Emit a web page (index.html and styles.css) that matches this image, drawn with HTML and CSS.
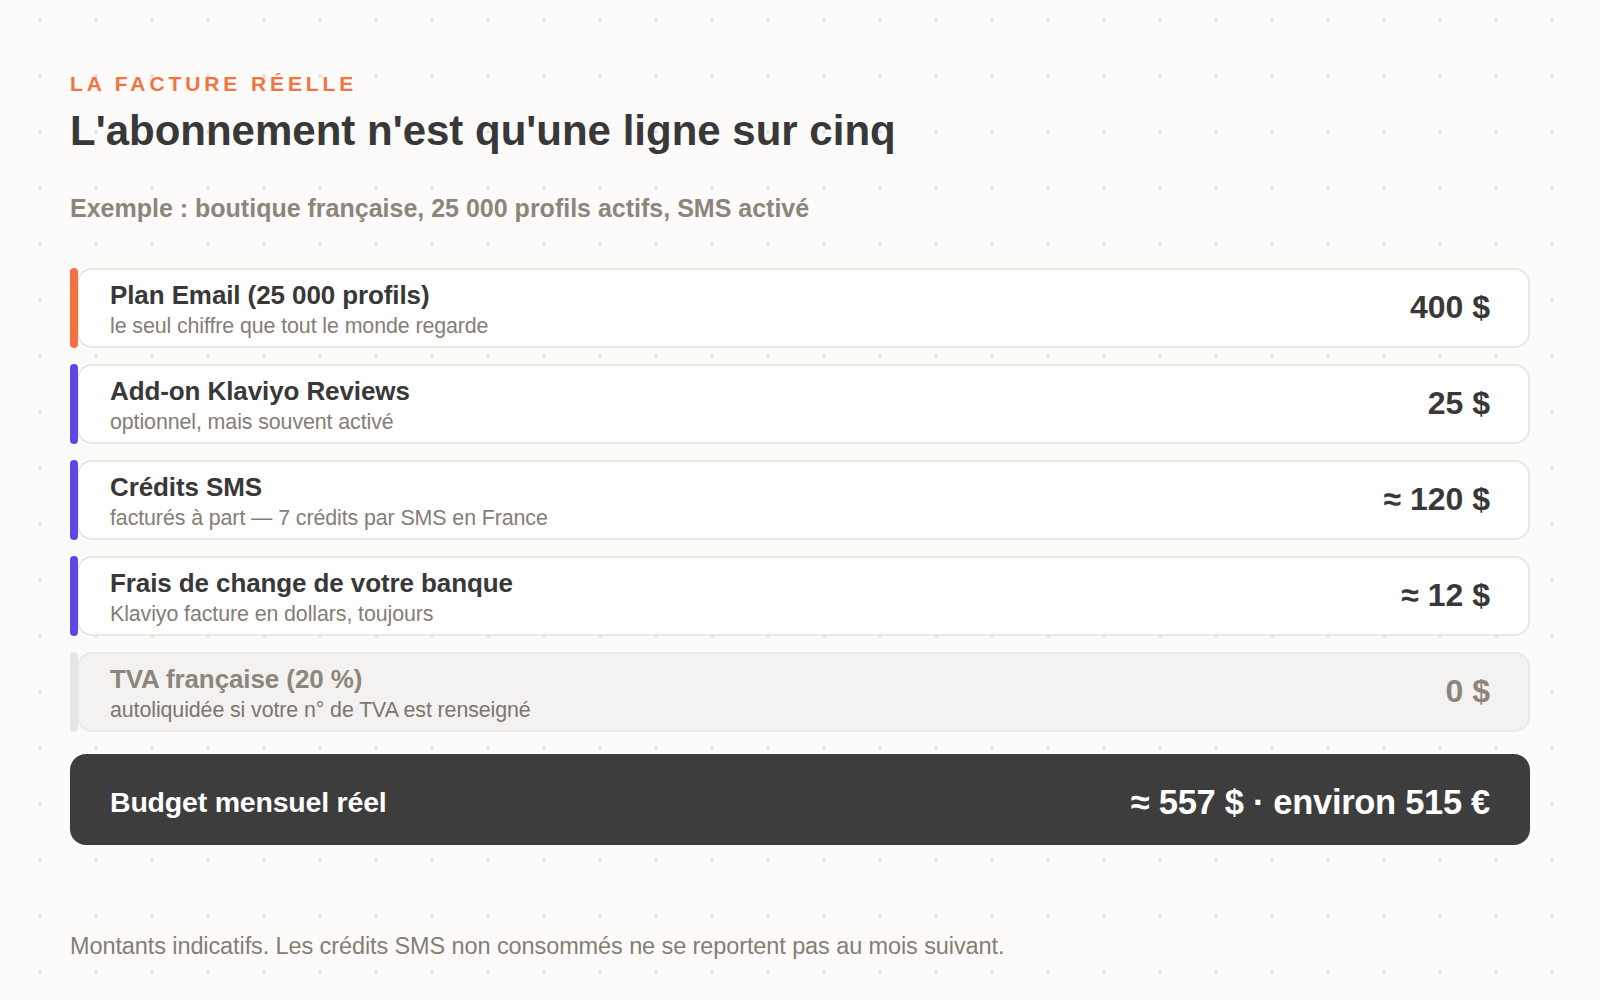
FILE: index.html
```html
<!DOCTYPE html>
<html lang="fr">
<head>
<meta charset="utf-8">
<title>La facture réelle</title>
<link rel="stylesheet" href="styles.css">
</head>
<body>
<main class="page">
  <header class="head">
    <p class="eyebrow">LA FACTURE RÉELLE</p>
    <h1 class="title">L'abonnement n'est qu'une ligne sur cinq</h1>
    <p class="example">Exemple : boutique française, 25 000 profils actifs, SMS activé</p>
  </header>

  <section class="lines">
    <div class="line">
      <span class="bar bar-orange"></span>
      <div class="card">
        <div class="label">
          <div class="name">Plan Email (25 000 profils)</div>
          <div class="note">le seul chiffre que tout le monde regarde</div>
        </div>
        <div class="amount">400 $</div>
      </div>
    </div>
    <div class="line">
      <span class="bar bar-purple"></span>
      <div class="card">
        <div class="label">
          <div class="name">Add-on Klaviyo Reviews</div>
          <div class="note">optionnel, mais souvent activé</div>
        </div>
        <div class="amount">25 $</div>
      </div>
    </div>
    <div class="line">
      <span class="bar bar-purple"></span>
      <div class="card">
        <div class="label">
          <div class="name">Crédits SMS</div>
          <div class="note">facturés à part — 7 crédits par SMS en France</div>
        </div>
        <div class="amount">≈ 120 $</div>
      </div>
    </div>
    <div class="line">
      <span class="bar bar-purple"></span>
      <div class="card">
        <div class="label">
          <div class="name">Frais de change de votre banque</div>
          <div class="note">Klaviyo facture en dollars, toujours</div>
        </div>
        <div class="amount">≈ 12 $</div>
      </div>
    </div>
    <div class="line line-muted">
      <span class="bar bar-grey"></span>
      <div class="card">
        <div class="label">
          <div class="name">TVA française (20 %)</div>
          <div class="note">autoliquidée si votre n° de TVA est renseigné</div>
        </div>
        <div class="amount">0 $</div>
      </div>
    </div>
  </section>

  <div class="total">
    <span class="total-label">Budget mensuel réel</span>
    <span class="total-amount">≈ 557 $ · environ 515 €</span>
  </div>

  <p class="footnote">Montants indicatifs. Les crédits SMS non consommés ne se reportent pas au mois suivant.</p>
</main>
</body>
</html>
```

FILE: styles.css
```css
* { box-sizing: border-box; }

html, body { height: 100%; }

body {
  margin: 0;
  font-family: "Liberation Sans", Arial, Helvetica, sans-serif;
  color: #383838;
  background-color: #fcfbfa;
  background-image: radial-gradient(circle, #e3e0db 1.5px, rgba(227, 224, 219, 0) 2.2px);
  background-size: 56px 56px;
  background-position: 12px -8px;
}

.page {
  padding: 72px 70px 0 70px;
}

.eyebrow {
  margin: 0;
  font-size: 21px;
  line-height: 24px;
  font-weight: 700;
  letter-spacing: 3.9px;
  color: #f2743f;
}

.title {
  margin: 10px 0 0 0;
  font-size: 42px;
  line-height: 50px;
  font-weight: 700;
  color: #383838;
  letter-spacing: 0;
}

.example {
  margin: 38px 0 0 0;
  font-size: 25px;
  line-height: 28px;
  font-weight: 700;
  color: #8c857a;
  letter-spacing: 0;
}

.lines {
  margin-top: 46px;
  display: flex;
  flex-direction: column;
  gap: 16px;
}

.line {
  display: flex;
  height: 80px;
}

.bar {
  flex: 0 0 8px;
  width: 8px;
  border-radius: 4px;
  position: relative;
  z-index: 1;
}

.bar-orange { background: #f47240; }
.bar-purple { background: #5b48e6; }
.bar-grey { background: #e8e6e2; }

.card {
  flex: 1;
  margin-left: -1px;
  display: flex;
  align-items: center;
  justify-content: space-between;
  padding: 0 38px 0 31px;
  background: #ffffff;
  border: 2px solid #ebe8e3;
  border-radius: 15px;
}

.label {
  display: flex;
  flex-direction: column;
  padding-top: 4px;
}

.name {
  font-size: 26px;
  line-height: 32px;
  font-weight: 700;
  color: #383838;
  letter-spacing: -0.1px;
}

.note {
  font-size: 21.4px;
  line-height: 30px;
  color: #857e73;
  letter-spacing: -0.1px;
}

.amount {
  font-size: 32px;
  line-height: 36px;
  font-weight: 700;
  color: #383838;
  padding-bottom: 3px;
}

.line-muted .card {
  background: #f3f2f1;
  border-color: #eceae6;
}

.line-muted .name,
.line-muted .amount {
  color: #8c857a;
}

.line-muted .note {
  color: #7c766c;
}

.total {
  margin-top: 22px;
  height: 91px;
  display: flex;
  align-items: center;
  justify-content: space-between;
  padding: 5px 40px 0 40px;
  background: #3d3d3d;
  border-radius: 16px;
  color: #ffffff;
}

.total-label {
  font-size: 28.5px;
  font-weight: 700;
  letter-spacing: -0.2px;
}

.total-amount {
  font-size: 34.5px;
  font-weight: 700;
  letter-spacing: -0.3px;
}

.footnote {
  margin: 88px 0 0 0;
  font-size: 23.5px;
  line-height: 26px;
  color: #857e73;
  letter-spacing: -0.1px;
}
```
